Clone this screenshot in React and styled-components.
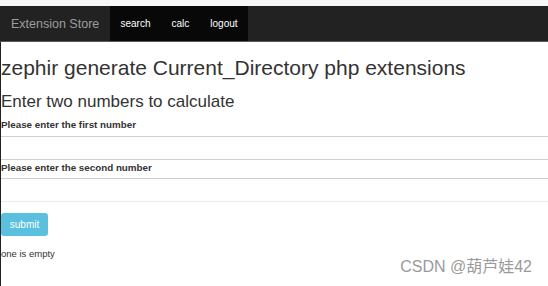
import React from 'react'
import styled, { createGlobalStyle } from 'styled-components'

const GlobalStyle = createGlobalStyle`
  html, body {
    margin: 0;
    padding: 0;
    background: #fff;
    font-family: "Liberation Sans", Arial, sans-serif;
    color: #333;
  }
`

const Page = styled.div`
  width: 548px;
  height: 286px;
  overflow: hidden;
  position: relative;
`

const TabStrip = styled.div`
  height: 6px;
  background: #f7f7f9;
`

const Navbar = styled.nav`
  height: 35px;
  background: #222;
  border-bottom: 1px solid #5a5a5a;
  display: flex;
  align-items: stretch;
`

const Brand = styled.a`
  width: 110px;
  padding-left: 11px;
  box-sizing: border-box;
  display: flex;
  align-items: center;
  font-size: 12.5px;
  color: #9d9d9d;
`

const Links = styled.ul`
  list-style: none;
  margin: 0;
  padding: 0;
  display: flex;
  background: #080808;
`

const Link = styled.li`
  display: flex;
  align-items: center;
  padding: 0 10.5px;
  font-size: 10px;
  color: #fff;
`

const Main = styled.main`
  border-left: 1px solid #222;
  height: 244px;
`

const Title = styled.h1`
  margin: 0;
  padding-top: 13px;
  font-size: 21px;
  font-weight: 400;
  line-height: 26px;
  color: #333;
`

const Subtitle = styled.h3`
  margin: 11px 0 0;
  font-size: 17px;
  font-weight: 400;
  line-height: 20px;
`

const Label = styled.label`
  display: block;
  font-size: 9.8px;
  font-weight: 700;
  line-height: 12px;
  margin-top: ${p => p.$top || 0}px;
`

const Input = styled.div`
  height: 22px;
  margin-top: ${p => p.$top || 0}px;
  border-top: 1px solid #cfcfcf;
  border-bottom: 1px solid ${p => p.$last ? '#ececec' : '#cfcfcf'};
`

const Submit = styled.button`
  margin-top: 11px;
  display: block;
  width: 47px;
  height: 23px;
  border: none;
  border-radius: 3px;
  background: #5bc0de;
  color: #fff;
  font-family: inherit;
  font-size: 10px;
  padding: 0;
`

const Message = styled.p`
  margin: 12px 0 0;
  font-size: 9.5px;
  line-height: 12px;
  color: #333;
`

const Watermark = styled.div`
  position: absolute;
  right: 16px;
  bottom: 9px;
  font-size: 16px;
  color: #9a9a9a;
  font-family: "Liberation Sans", "Noto Sans CJK SC", sans-serif;
`

export default function App() {
  return (
    <Page>
      <GlobalStyle />
      <TabStrip />
      <Navbar>
        <Brand>Extension Store</Brand>
        <Links>
          <Link>search</Link>
          <Link>calc</Link>
          <Link>logout</Link>
        </Links>
      </Navbar>
      <Main>
        <Title>zephir generate Current_Directory php extensions</Title>
        <Subtitle>Enter two numbers to calculate</Subtitle>
        <Label $top={7}>Please enter the first number</Label>
        <Input $top={5} />
        <Label $top={2}>Please enter the second number</Label>
        <Input $top={4} $last />
        <Submit>submit</Submit>
        <Message>one is empty</Message>
      </Main>
      <Watermark>CSDN @葫芦娃42</Watermark>
    </Page>
  )
}
